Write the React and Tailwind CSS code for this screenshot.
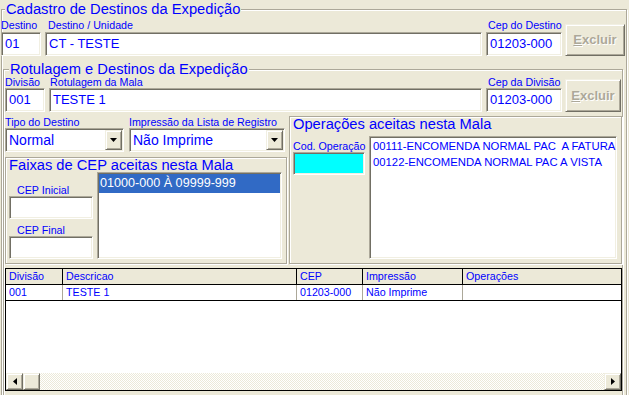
const sunken =
  'border border-t-[#ACA899] border-l-[#ACA899] border-b-white border-r-white shadow-[inset_1px_1px_0_#716F64,inset_-1px_-1px_0_#F1EFE2]'
const raised =
  'border border-t-[#F1EFE2] border-l-[#F1EFE2] border-b-[#716F64] border-r-[#716F64] shadow-[inset_1px_1px_0_#fff,inset_-1px_-1px_0_#ACA899] bg-[#ECE9D8]'
const etched = 'border border-[#ACA899] shadow-[inset_1px_1px_0_#fff,1px_1px_0_#fff]'

function Label({ children, className = '' }) {
  return (
    <div className={`h-[12px] leading-[12px] text-[10.7px] whitespace-nowrap ${className}`}>{children}</div>
  )
}

function Field({ value, className = '' }) {
  return (
    <div className={`${sunken} bg-white px-[3px] text-[13px] flex items-center whitespace-nowrap overflow-hidden ${className}`}>
      {value}
    </div>
  )
}

function Excluir({ className = '' }) {
  return (
    <div className={`${raised} flex items-center justify-center font-bold text-[13px] text-[#ACA899] [text-shadow:1px_1px_0_#fff] ${className}`}>
      <span><span className="underline">E</span>xcluir</span>
    </div>
  )
}

function Combo({ value, className = '' }) {
  return (
    <div className={`${sunken} bg-white h-[24px] flex items-center pl-[3px] pr-[1px] ${className}`}>
      <span className="flex-1 text-[14px] whitespace-nowrap">{value}</span>
      <div className={`${raised} w-[17px] h-[20px] flex items-center justify-center`}>
        <svg width="7" height="4" viewBox="0 0 7 4"><path d="M0 0h7L3.5 4z" fill="#000" /></svg>
      </div>
    </div>
  )
}

function Arrow({ dir }) {
  return (
    <div className={`${raised} w-[17px] h-full flex items-center justify-center`}>
      <svg width="4" height="7" viewBox="0 0 4 7">
        <path d={dir === 'left' ? 'M4 0v7L0 3.5z' : 'M0 0v7l4-3.5z'} fill="#000" />
      </svg>
    </div>
  )
}

const COLS = [
  { name: 'Divisão', value: '001', w: 'w-[57px]' },
  { name: 'Descricao', value: 'TESTE 1', w: 'w-[234px]' },
  { name: 'CEP', value: '01203-000', w: 'w-[66px]' },
  { name: 'Impressão', value: 'Não Imprime', w: 'w-[100px]' },
  { name: 'Operações', value: '', w: 'flex-1' },
]

export default function App() {
  return (
    <div className="w-[629px] h-[395px] overflow-hidden bg-[#ECE9D8] text-[#0000ff] font-['Liberation_Sans',Arial,sans-serif]">
      {/* Cadastro de Destinos */}
      <div className={`relative ml-[1px] mt-[9px] w-[626px] h-[420px] ${etched}`}>
        <span className="absolute left-[3px] top-[-10px] px-[1px] bg-[#ECE9D8] text-[14.7px] leading-[18px] whitespace-nowrap">
          Cadastro de Destinos da Expedição
        </span>

        <div className="flex items-end gap-[4px] pt-[9px] ml-[-1px]">
          <div>
            <Label className="h-[13px]">Destino</Label>
            <Field value="01" className="w-[40px] h-[24px]" />
          </div>
          <div>
            <Label className="h-[13px] pl-[3px]">Destino / Unidade</Label>
            <Field value="CT - TESTE" className="w-[437px] h-[24px]" />
          </div>
          <div>
            <Label className="h-[13px] pl-[2px]">Cep do Destino</Label>
            <Field value="01203-000" className="w-[76px] h-[24px]" />
          </div>
          <Excluir className="ml-[-1px] w-[60px] h-[32px]" />
        </div>

        {/* Rotulagem e Destinos */}
        <div className={`relative mt-[13px] ml-[1px] w-[620px] h-[400px] ${etched}`}>
          <span className="absolute left-[5px] top-[-10px] px-[1px] bg-[#ECE9D8] text-[14.7px] leading-[18px] whitespace-nowrap">
            Rotulagem e Destinos da Expedição
          </span>

          <div className="flex items-end gap-[4px] pt-[6px] ml-[1px]">
            <div>
              <Label>Divisão</Label>
              <Field value="001" className="w-[40px] h-[24px]" />
            </div>
            <div>
              <Label className="pl-[1px]">Rotulagem da Mala</Label>
              <Field value="TESTE 1" className="w-[433px] h-[24px]" />
            </div>
            <div>
              <Label className="pl-[2px]">Cep da Divisão</Label>
              <Field value="01203-000" className="w-[76px] h-[24px]" />
            </div>
            <Excluir className="ml-[-1px] w-[56px] h-[33px]" />
          </div>

          <div className="flex items-start mt-[4px] ml-[1px]">
            <div className="w-[282px]">
              <div className="flex gap-[5px]">
                <div>
                  <Label>Tipo do Destino</Label>
                  <Combo value="Normal" className="w-[119px]" />
                </div>
                <div>
                  <Label>Impressão da Lista de Registro</Label>
                  <Combo value="Não Imprime" className="w-[156px]" />
                </div>
              </div>

              <div className={`mt-[5px] w-[282px] h-[107px] ${etched}`}>
                <div className="h-[14px] leading-[14px] pl-[3px] text-[14.7px] whitespace-nowrap">
                  Faixas de CEP aceitas nesta Mala
                </div>
                <div className="flex">
                  <div className="ml-[3px] w-[84px]">
                    <Label className="mt-[12px] pl-[8px]">CEP Inicial</Label>
                    <Field value="" className="w-[84px] h-[23px]" />
                    <Label className="mt-[5px] pl-[8px]">CEP Final</Label>
                    <Field value="" className="w-[84px] h-[23px]" />
                  </div>
                  <div className={`${sunken} bg-white ml-[4px] w-[185px] h-[87px] p-[1px]`}>
                    <div className="h-[19px] bg-[#316AC5] text-white text-[12.6px] leading-[19px] pl-[1px] whitespace-nowrap">
                      01000-000 À 09999-999
                    </div>
                  </div>
                </div>
              </div>
            </div>

            <div className={`ml-[2px] w-[333px] h-[148px] ${etched}`}>
              <div className="h-[19px] leading-[15px] pl-[3px] text-[14.7px] whitespace-nowrap">
                Operações aceitas nesta Mala
              </div>
              <div className="flex">
                <div className="ml-[3px] w-[72px]">
                  <Label className="mt-[4px]">Cod. Operação</Label>
                  <div className={`${sunken} bg-[#00FFFF] w-[72px] h-[23px]`} />
                </div>
                <div className={`${sunken} bg-white ml-[4px] w-[248px] h-[123px] p-[1px] overflow-hidden text-[11.3px] leading-[16px] whitespace-pre`}>
                  <div className="pl-[2px]">00111-ENCOMENDA NORMAL PAC  A FATURAR</div>
                  <div className="pl-[2px]">00122-ENCOMENDA NORMAL PAC A VISTA</div>
                </div>
              </div>
            </div>
          </div>

          {/* Grid */}
          <div className="mt-[4px] ml-[1px] w-[617px] h-[123px] border border-black bg-white flex flex-col text-[10.7px]">
            <div className="flex h-[16px] border-b border-black bg-[#ECE9D8]">
              {COLS.map(c => (
                <div key={c.name} className={`${c.w} ${c.w === 'flex-1' ? '' : 'border-r border-black'} pl-[3px] leading-[15px] whitespace-nowrap`}>
                  {c.name}
                </div>
              ))}
            </div>
            <div className="flex h-[16px] border-b border-black">
              {COLS.map(c => (
                <div key={c.name} className={`${c.w} ${c.w === 'flex-1' ? '' : 'border-r border-[#ACA899]'} pl-[3px] leading-[15px] whitespace-nowrap`}>
                  {c.value}
                </div>
              ))}
            </div>
            <div className="flex-1" />
            <div className="flex h-[17px]">
              <Arrow dir="left" />
              <div className={`${raised} w-[17px] h-full`} />
              <div className="flex-1 bg-[repeating-conic-gradient(#ECE9D8_0_25%,#fff_0_50%)] bg-[length:2px_2px]" />
              <Arrow dir="right" />
            </div>
          </div>
        </div>
      </div>
    </div>
  )
}
